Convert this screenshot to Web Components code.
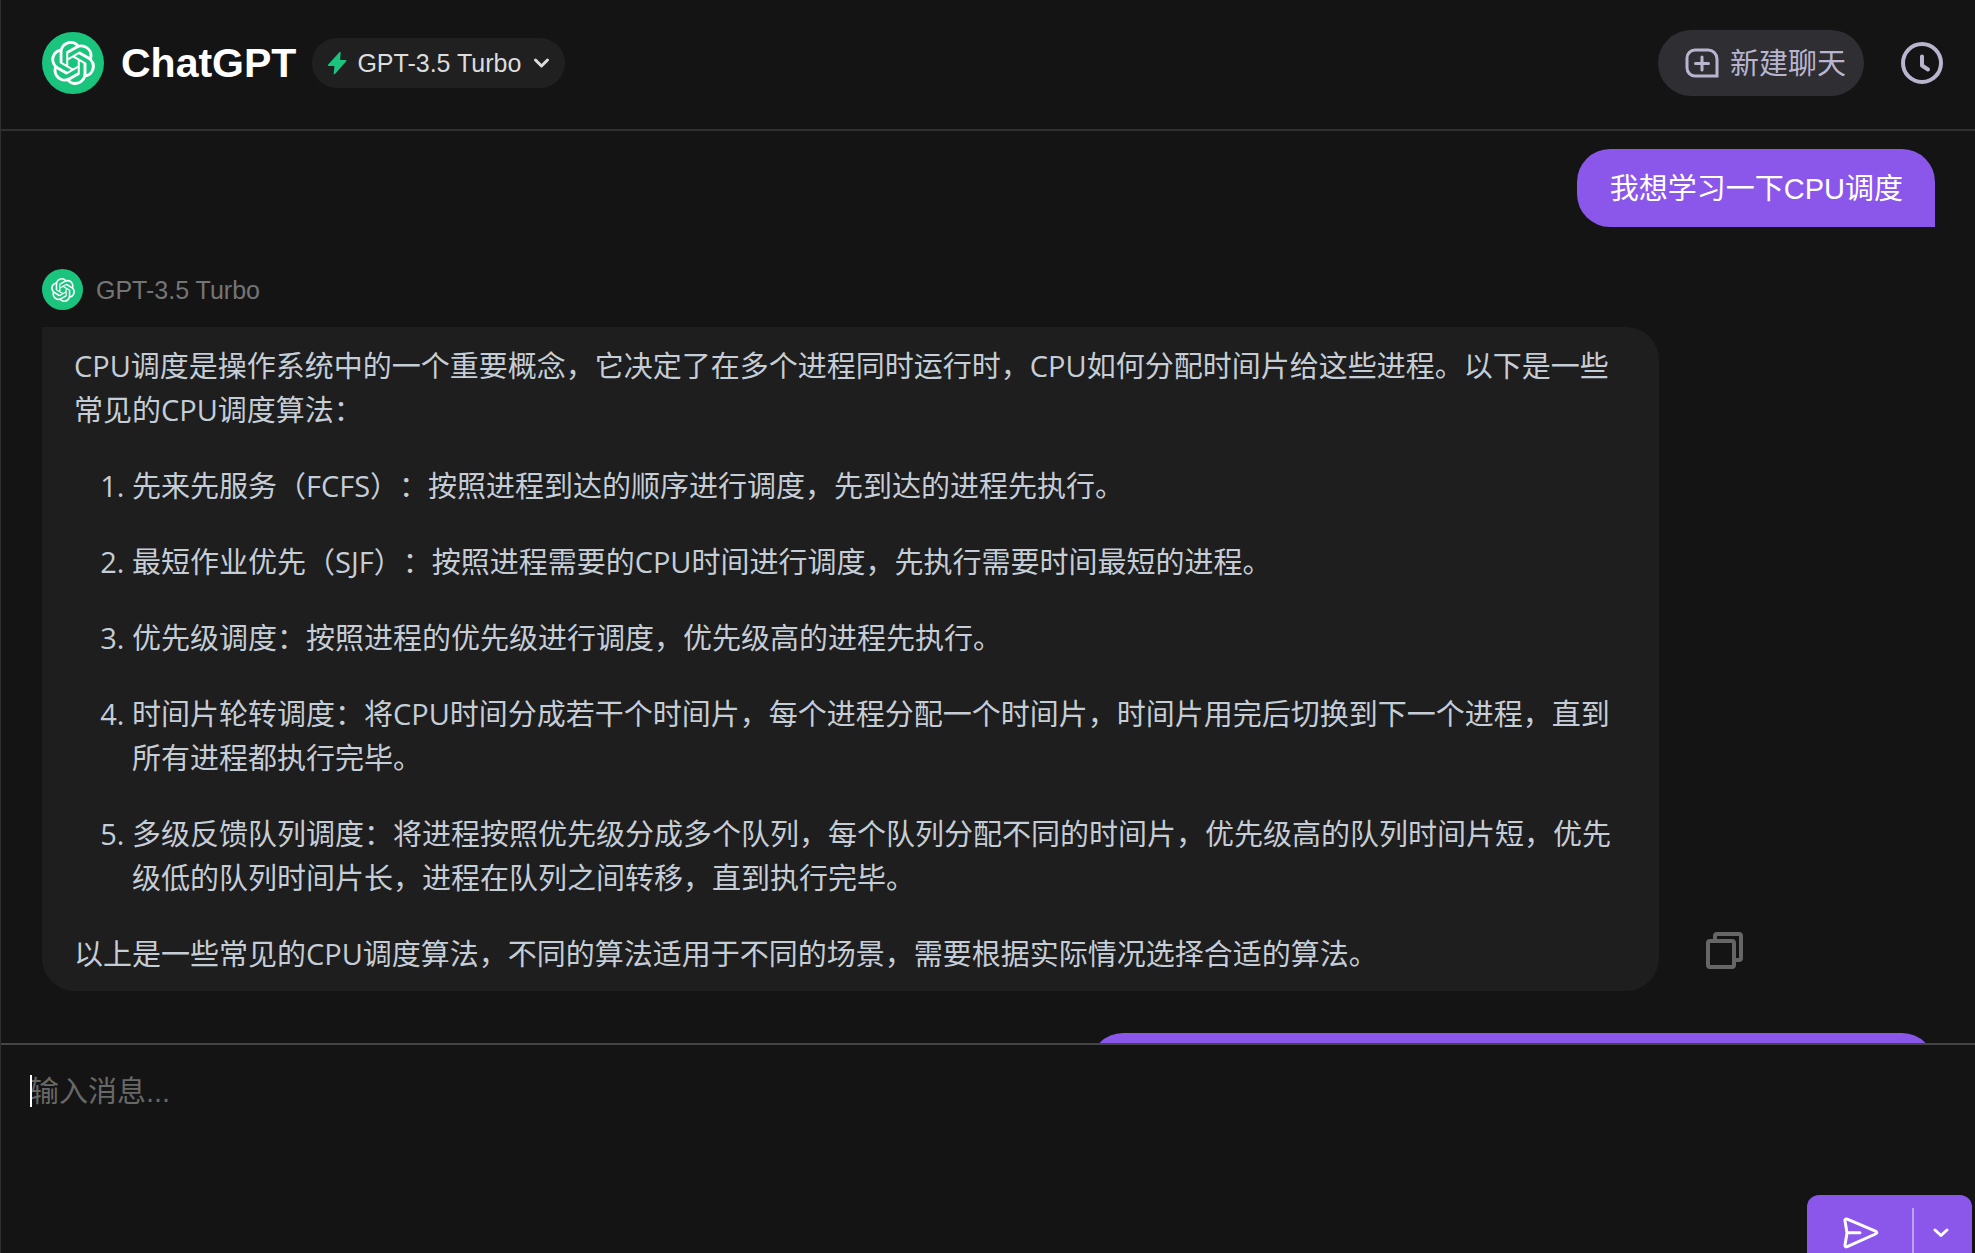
<!DOCTYPE html>
<html lang="zh-CN">
<head>
<meta charset="utf-8">
<title>ChatGPT</title>
<style>
  html, body { height: 100%; margin: 0; }
  body {
    overflow: hidden;
    background: #141414;
    --line: #303030;
    --accent: #8b57ea;
    --brand: #1bc47d;
    --ui: "Liberation Sans", "Noto Sans CJK SC", sans-serif;
    --prose: "Open Sans", "Noto Sans CJK SC", sans-serif;
    font-family: var(--ui);
    font-size: 29px;
    text-spacing-trim: space-all;
  }
</style>
</head>
<body>
<chat-app></chat-app>

<script>
const define = (name, html, setup) => {
  const template = document.createElement('template');
  template.innerHTML = html;
  customElements.define(name, class extends HTMLElement {
    constructor() {
      super();
      this.attachShadow({ mode: 'open' }).append(template.content.cloneNode(true));
    }
    connectedCallback() { if (setup) setup(this, this.shadowRoot); }
  });
};

define('brand-avatar', `
  <style>
    :host { display: grid; place-items: center; flex: none; width: var(--size, 62px); height: var(--size, 62px); border-radius: 50%; background: var(--brand); }
    svg { display: block; width: var(--mark, 44px); height: var(--mark, 44px); fill: #fff; }
  </style>
  <svg viewBox="0 0 24 24" aria-hidden="true"><path d="M22.2819 9.8211a5.9847 5.9847 0 0 0-.5157-4.9108 6.0462 6.0462 0 0 0-6.5098-2.9A6.0651 6.0651 0 0 0 4.9807 4.1818a5.9847 5.9847 0 0 0-3.9977 2.9 6.0462 6.0462 0 0 0 .7427 7.0966 5.98 5.98 0 0 0 .511 4.9107 6.051 6.051 0 0 0 6.5146 2.9001A5.9847 5.9847 0 0 0 13.2599 24a6.0557 6.0557 0 0 0 5.7718-4.2058 5.9894 5.9894 0 0 0 3.9977-2.9001 6.0557 6.0557 0 0 0-.7475-7.0729zm-9.022 12.6081a4.4755 4.4755 0 0 1-2.8764-1.0408l.1419-.0804 4.7783-2.7582a.7948.7948 0 0 0 .3927-.6813v-6.7369l2.02 1.1686a.071.071 0 0 1 .038.052v5.5826a4.504 4.504 0 0 1-4.4945 4.4944zm-9.6607-4.1254a4.4708 4.4708 0 0 1-.5346-3.0137l.142.0852 4.783 2.7582a.7712.7712 0 0 0 .7806 0l5.8428-3.3685v2.3324a.0804.0804 0 0 1-.0332.0615L9.74 19.9502a4.4992 4.4992 0 0 1-6.1408-1.6464zM2.3408 7.8956a4.485 4.485 0 0 1 2.3655-1.9728V11.6a.7664.7664 0 0 0 .3879.6765l5.8144 3.3543-2.0201 1.1685a.0757.0757 0 0 1-.071 0l-4.8303-2.7865A4.504 4.504 0 0 1 2.3408 7.872zm16.5963 3.8558L13.1038 8.364 15.1192 7.2a.0757.0757 0 0 1 .071 0l4.8303 2.7913a4.4944 4.4944 0 0 1-.6765 8.1042v-5.6772a.79.79 0 0 0-.407-.667zm2.0107-3.0231l-.142-.0852-4.7735-2.7818a.7759.7759 0 0 0-.7854 0L9.409 9.2297V6.8974a.0662.0662 0 0 1 .0284-.0615l4.8303-2.7866a4.4992 4.4992 0 0 1 6.6802 4.66zM8.3065 12.863l-2.02-1.1638a.0804.0804 0 0 1-.038-.0567V6.0742a4.4992 4.4992 0 0 1 7.3757-3.4537l-.142.0805L8.704 5.459a.7948.7948 0 0 0-.3927.6813zm1.0976-2.3654l2.602-1.4998 2.6069 1.4998v2.9994l-2.5974 1.4997-2.6067-1.4997Z"/></svg>
`);

define('model-picker', `
  <style>
    :host { display: block; }
    button { display: flex; align-items: center; height: 50px; padding: 0 15px; border: 0; border-radius: 25px; background: #202020; color: #dcdcdc; font: 25px/32px var(--ui); cursor: pointer; }
    span { padding: 0 12px 0 10px; white-space: nowrap; }
    svg { display: block; flex: none; }
  </style>
  <button type="button" aria-haspopup="listbox">
    <svg width="20" height="26" viewBox="0 0 20 26" aria-hidden="true"><path d="M12.4 2.300 1 14.800c-.5.6-.2 1.200.6 1.200h5.800L6.700 23.400c-.1.900.7 1.200 1.300.5L19.200 11.300c.5-.6.2-1.300-.6-1.300h-5.500L13.700 2.800c.1-.9-.7-1.200-1.300-.5Z" fill="#1bc47d"/></svg>
    <span><slot></slot></span>
    <svg width="17" height="12" viewBox="0 0 17 12" aria-hidden="true"><path d="m2.5 3 6 6 6-6" fill="none" stroke="#dcdcdc" stroke-width="3" stroke-linecap="round" stroke-linejoin="round"/></svg>
  </button>
`);

define('chat-header', `
  <style>
    :host { display: block; }
    header { display: flex; align-items: center; box-sizing: border-box; height: 131px; padding: 0 32px 3px 41px; border-bottom: 2px solid var(--line); }
    h1 { margin: 0 16px 0 17px; color: #fff; font: bold 41px/48px var(--ui); }
    nav { display: flex; align-items: center; gap: 37px; margin-left: auto; }
    button { display: flex; align-items: center; padding: 0; border: 0; background: none; color: #b9b5cf; font: 29px/40px var(--ui); cursor: pointer; }
    .new { gap: 11px; height: 66px; padding: 0 18px 0 27px; border-radius: 33px; background: #2e2e33; }
    .new span { padding-top: 2px; }
    svg { display: block; fill: none; stroke: currentColor; stroke-linecap: round; stroke-linejoin: round; }
  </style>
  <header>
    <brand-avatar></brand-avatar>
    <h1>ChatGPT</h1>
    <model-picker>GPT-3.5 Turbo</model-picker>
    <nav>
      <button class="new" type="button">
        <svg width="34" height="30" viewBox="0 0 34 30" stroke-width="3" aria-hidden="true"><path d="M10 2h13a9 9 0 0 1 9 9v17H10a8 8 0 0 1-8-8v-10a8 8 0 0 1 8-8Z" stroke-linejoin="miter"/><path d="M17 9v13M10.500 15.500h13"/></svg>
        <span>新建聊天</span>
      </button>
      <button type="button" aria-label="历史记录">
        <svg width="42" height="42" viewBox="0 0 42 42" stroke-width="4" aria-hidden="true"><circle cx="21" cy="21" r="19"/><path d="M21 14.500v9l6 4"/></svg>
      </button>
    </nav>
  </header>
`);

define('user-message', `
  <style>
    :host { display: flex; justify-content: flex-end; }
    div { box-sizing: border-box; min-height: 78px; padding: 18px 32px 16px 33px; border-radius: 33px 33px 0 33px; background: var(--accent); color: #fff; font: 29px/44px var(--ui); }
    :host([long]) div { width: 845px; max-width: 85%; }
  </style>
  <div><slot></slot></div>
`);

define('assistant-message', `
  <style>
    :host { display: block; }
    .who { display: flex; align-items: center; gap: 13px; margin-bottom: 17px; color: #757575; font: 25px/32px var(--ui); }
    brand-avatar { --size: 41px; --mark: 24px; }
    .row { display: flex; align-items: flex-end; }
    article { flex: 1; min-width: 0; padding: 17px 32px 15px; border-radius: 0 33px 33px 33px; background: #1e1e1e; color: #c5cdd6; font: 29px/44px var(--prose); }
    .tools { flex: none; box-sizing: border-box; width: 276px; padding: 0 0 21px 46px; }
    button { display: block; padding: 0; border: 0; background: none; color: #666; cursor: pointer; }
    svg { display: block; fill: none; stroke: currentColor; stroke-width: 4; stroke-linejoin: round; }
    ::slotted(p), ::slotted(ol) { margin: 0; }
    ::slotted(ol) { margin: 32px 0; padding: 0 0 0 58px; }
  </style>
  <div class="who"><brand-avatar></brand-avatar><span class="name"></span></div>
  <div class="row">
    <article><slot></slot></article>
    <div class="tools">
      <button type="button" aria-label="复制">
        <svg width="39" height="39" viewBox="0 0 39 39" aria-hidden="true"><rect x="3" y="10" width="26" height="26" rx="2"/><path d="M10 10V5a2 2 0 0 1 2-2h22a2 2 0 0 1 2 2v22a2 2 0 0 1-2 2h-5"/></svg>
      </button>
    </div>
  </div>
`, (host, root) => { root.querySelector('.name').textContent = host.getAttribute('name'); });

define('chat-composer', `
  <style>
    :host { display: block; box-sizing: border-box; height: 210px; overflow: hidden; border-top: 2px solid #454545; }
    .field { display: flex; box-sizing: border-box; height: 150px; padding: 25px 29px 0; position: relative; }
    .caret { position: absolute; left: 29px; top: 30px; width: 2px; height: 32px; background: #fff; }
    textarea { flex: 1; min-width: 0; margin: 0; padding: 0; border: 0; outline: 0; resize: none; background: none; color: #ddd; font: 29px/44px var(--ui); }
    textarea::placeholder { color: #686868; opacity: 1; }
    .actions { display: flex; justify-content: flex-end; padding-right: 3px; }
    .send { display: flex; align-items: center; height: 76px; border-radius: 12px; background: var(--accent); }
    button { display: grid; place-items: center; height: 50px; padding: 0; border: 0; background: none; cursor: pointer; }
    .go { width: 105px; padding-left: 3px; }
    .more { box-sizing: border-box; width: 60px; padding-right: 5px; border-left: 2px solid #bea0f4; }
    svg { display: block; fill: none; stroke: #fff; stroke-width: 3; stroke-linecap: round; stroke-linejoin: round; }
  </style>
  <form>
    <div class="field"><textarea placeholder="输入消息..." aria-label="输入消息"></textarea><span class="caret"></span></div>
    <div class="actions">
      <div class="send">
        <button class="go" type="button" aria-label="发送"><svg width="36" height="32" viewBox="0 0 36 32" aria-hidden="true"><path d="M4.200 2.200 32.500 14.200c1.800.8 1.800 2 0 2.800L4.200 29.600c-1.500.6-2.400-.1-2.200-1.600L4 16 2 3.800c-.2-1.500.7-2.200 2.200-1.600ZM4 15.700h13"/></svg></button>
        <button class="more" type="button" aria-label="更多"><svg width="16" height="10" viewBox="0 0 16 10" aria-hidden="true"><path d="m2 2 6 5.500L14 2"/></svg></button>
      </div>
    </div>
  </form>
`);

define('chat-app', `
  <style>
    :host { display: flex; flex-direction: column; box-sizing: border-box; height: 100vh; border-left: 1px solid var(--line); }
    main { display: flex; flex-direction: column; gap: 42px; flex: 1; min-height: 0; overflow: hidden; padding: 18px 40px 0 41px; }
    main > * { flex: none; }
    li + li { margin-top: 32px; }
  </style>
  <chat-header></chat-header>
  <main>
    <user-message>我想学习一下CPU调度</user-message>
    <assistant-message name="GPT-3.5 Turbo">
      <p>CPU调度是操作系统中的一个重要概念，它决定了在多个进程同时运行时，CPU如何分配时间片给这些进程。以下是一些常见的CPU调度算法：</p>
      <ol>
        <li>先来先服务（FCFS）：按照进程到达的顺序进行调度，先到达的进程先执行。</li>
        <li>最短作业优先（SJF）：按照进程需要的CPU时间进行调度，先执行需要时间最短的进程。</li>
        <li>优先级调度：按照进程的优先级进行调度，优先级高的进程先执行。</li>
        <li>时间片轮转调度：将CPU时间分成若干个时间片，每个进程分配一个时间片，时间片用完后切换到下一个进程，直到所有进程都执行完毕。</li>
        <li>多级反馈队列调度：将进程按照优先级分成多个队列，每个队列分配不同的时间片，优先级高的队列时间片短，优先级低的队列时间片长，进程在队列之间转移，直到执行完毕。</li>
      </ol>
      <p>以上是一些常见的CPU调度算法，不同的算法适用于不同的场景，需要根据实际情况选择合适的算法。</p>
    </assistant-message>
    <user-message long></user-message>
  </main>
  <chat-composer></chat-composer>
`);
</script>
</body>
</html>
